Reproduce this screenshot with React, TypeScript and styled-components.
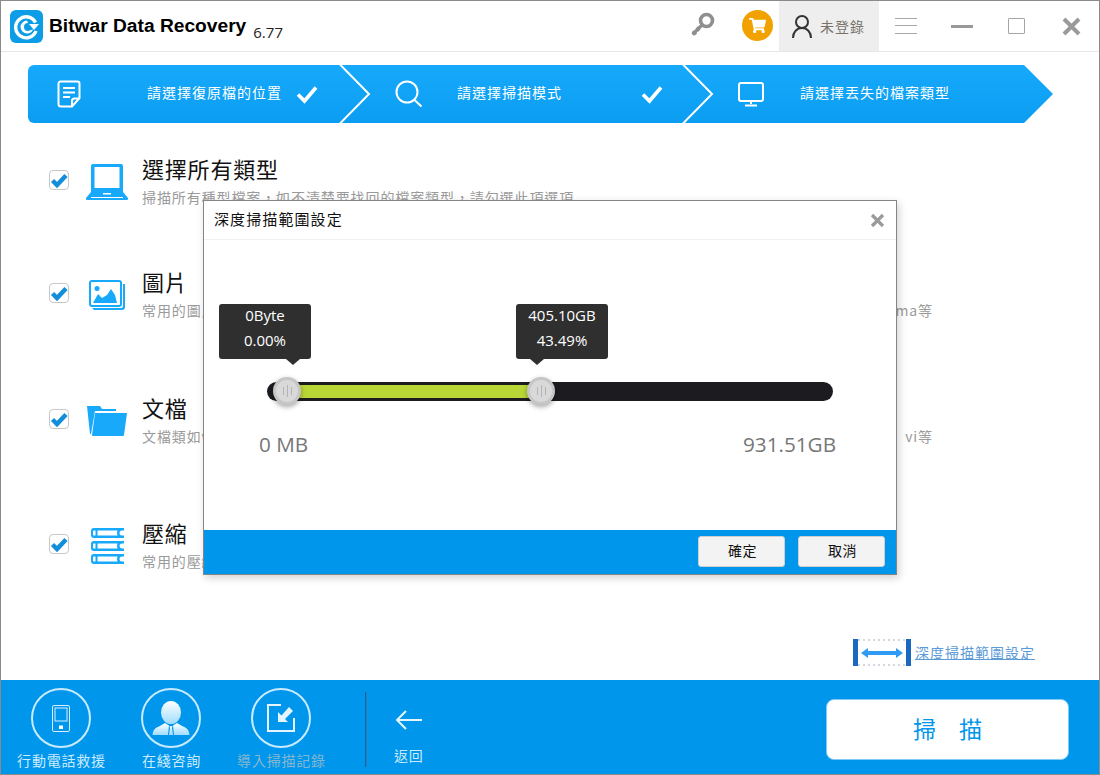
import React from "react";
import styled, { createGlobalStyle } from "styled-components";
import { FaShoppingCart } from "react-icons/fa";

const CJK = `"Noto Sans CJK TC", "Noto Sans", sans-serif`;
const BLUE = "#0096ec";
const ICON_BLUE = "#18a9fb";

const GlobalStyle = createGlobalStyle`
    html, body {
        margin: 0;
        padding: 0;
        background: #fff;
    }
    body {
        font-family: ${CJK};
    }
`;

const Window = styled.div`
    width: 1100px;
    height: 775px;
    box-sizing: border-box;
    border: 1px solid #8a8a8a;
    display: flex;
    flex-direction: column;
    background: #fff;
    overflow: hidden;
`;

const TitleBar = styled.header`
    height: 51px;
    flex: none;
    box-sizing: border-box;
    border-bottom: 1px solid #e6e6e6;
    display: flex;
    align-items: center;
    padding-left: 9px;
`;

const AppName = styled.span`
    font-family: "Liberation Sans", Arial, sans-serif;
    font-weight: 700;
    font-size: 19.2px;
    color: #000;
    margin-left: 6px;
    margin-top: -1px;
    white-space: nowrap;
`;

const Version = styled.span`
    font-family: "Open Sans", sans-serif;
    font-size: 15px;
    color: #222;
    margin-left: 7px;
    margin-top: 11px;
`;

const KeyButton = styled.div`
    margin-left: auto;
    margin-top: -3px;
    display: flex;
`;

const CartBadge = styled.div`
    width: 31px;
    height: 31px;
    border-radius: 50%;
    background: #f2a200;
    display: flex;
    align-items: center;
    justify-content: center;
    color: #fff;
    margin-left: 27px;
    margin-top: -2px;
`;

const UserPanel = styled.div`
    width: 100px;
    height: 50px;
    background: #eeeeee;
    margin-left: 6px;
    display: flex;
    align-items: center;
    padding-left: 13px;
    box-sizing: border-box;
    gap: 8px;
`;

const UserName = styled.span`
    font-size: 14px;
    letter-spacing: 1px;
    color: #77716a;
`;

const WindowControls = styled.div`
    display: flex;
    align-items: center;
    margin-left: 16px;
    margin-right: 18px;
`;

const MenuLines = styled.div`
    width: 22px;
    height: 14px;
    border-top: 1px solid #a8a8a8;
    border-bottom: 1px solid #a8a8a8;
    position: relative;
    &::after {
        content: "";
        position: absolute;
        left: 0;
        right: 0;
        top: 6px;
        height: 1px;
        background: #a8a8a8;
    }
`;

const MinimizeBar = styled.div`
    width: 22px;
    height: 3px;
    background: #999;
    margin-left: 34px;
`;

const MaximizeBox = styled.div`
    width: 17px;
    height: 16px;
    box-sizing: border-box;
    border: 1px solid #a5a5a5;
    border-radius: 1px;
    margin-left: 35px;
`;

const CloseGlyph = styled.svg`
    width: 19px;
    height: 19px;
    margin-left: 37px;
`;

const Main = styled.main`
    flex: 1;
    position: relative;
    display: flex;
    flex-direction: column;
    padding: 13px 0 0 27px;
    min-height: 0;
`;

const Stepper = styled.div`
    width: 1025px;
    height: 58px;
    flex: none;
    display: flex;
    color: #fff;
    background: linear-gradient(180deg, #17a9fb 0%, #0a9df1 100%);
    border-radius: 6px 0 0 6px;
    clip-path: polygon(0 0, 996px 0, 1025px 29px, 996px 58px, 0 58px);
`;

const Step = styled.div<{ $width: number; $pad: number }>`
    width: ${p => p.$width}px;
    padding-left: ${p => p.$pad}px;
    box-sizing: border-box;
    flex: none;
    position: relative;
    display: flex;
    align-items: center;
`;

const StepLabel = styled.span<{ $gap: number; $width?: number }>`
    margin-left: ${p => p.$gap}px;
    margin-top: -4px;
    width: ${p => (p.$width ? `${p.$width}px` : "auto")};
    flex: none;
    font-size: 14px;
    letter-spacing: 1px;
    white-space: nowrap;
`;

const StepArrow = styled.svg`
    position: absolute;
    right: -31px;
    top: 0;
    width: 32px;
    height: 58px;
    z-index: 1;
`;

const TypeList = styled.div`
    display: flex;
    flex-direction: column;
    margin-left: 21px;
`;

const TypeRow = styled.div<{ $top: number }>`
    display: flex;
    align-items: center;
    height: 56px;
    margin-top: ${p => p.$top}px;
`;

const CheckBox = styled.div`
    width: 20px;
    height: 20px;
    flex: none;
    box-sizing: border-box;
    border: 1px solid #c8c8c8;
    border-radius: 4px;
    position: relative;
`;

const CheckMark = styled.svg`
    position: absolute;
    left: 0;
    top: 1px;
    width: 19px;
    height: 17px;
`;

const TypeIcon = styled.div`
    width: 44px;
    height: 40px;
    flex: none;
    margin: 4px 13px 0 16px;
    display: flex;
    align-items: center;
    justify-content: center;
`;

const TypeText = styled.div`
    display: flex;
    flex-direction: column;
`;

const TypeTitle = styled.div`
    font-size: 22px;
    line-height: 32px;
    color: #111;
    letter-spacing: 0.8px;
`;

const TypeSub = styled.div`
    width: 791px;
    margin: 1px 0 -1px;
    display: flex;
    justify-content: space-between;
    font-size: 14px;
    letter-spacing: 0.9px;
    line-height: 24px;
    color: #9a9a9a;
    white-space: nowrap;
`;

const DeepLinkRow = styled.div`
    margin-top: auto;
    margin-bottom: 14px;
    margin-right: 64px;
    align-self: flex-end;
    display: flex;
    align-items: center;
    gap: 4px;
`;

const DeepLink = styled.a`
    font-size: 14px;
    letter-spacing: 1px;
    color: #5d9bd8;
    text-decoration: underline;
    margin-top: -2px;
`;

const Modal = styled.section`
    position: absolute;
    left: 202px;
    top: 148px;
    width: 694px;
    height: 375px;
    box-sizing: border-box;
    border: 1px solid #858585;
    background: #fff;
    box-shadow: 2px 3px 8px rgba(0, 0, 0, 0.18);
    display: flex;
    flex-direction: column;
    z-index: 2;
`;

const ModalHeader = styled.div`
    height: 39px;
    flex: none;
    box-sizing: border-box;
    border-bottom: 1px solid #f0f0f0;
    display: flex;
    align-items: center;
    justify-content: space-between;
    padding: 0 11px 0 10px;
`;

const ModalTitle = styled.h2`
    margin: 0 0 4px;
    font-weight: 400;
    font-size: 15px;
    letter-spacing: 1.1px;
    color: #111;
`;

const ModalBody = styled.div`
    flex: 1;
    padding: 142px 60px 0 55px;
`;

const Track = styled.div`
    position: relative;
    margin-left: 8px;
    width: 566px;
    height: 19px;
    border-radius: 10px;
    background: #1c1c20;
`;

const TrackFill = styled.div<{ $left: number; $width: number }>`
    position: absolute;
    left: ${p => p.$left}px;
    width: ${p => p.$width}px;
    top: 3px;
    height: 13px;
    background: #b9d637;
`;

const Thumb = styled.div<{ $left: number }>`
    position: absolute;
    left: ${p => p.$left}px;
    top: -5px;
    width: 28px;
    height: 28px;
    box-sizing: border-box;
    border-radius: 50%;
    background: #d9d9d9;
    border: 3px solid #c6c6c6;
    box-shadow: 0 2px 5px rgba(0, 0, 0, 0.35);
    display: flex;
    align-items: center;
    justify-content: center;
    gap: 3px;
    z-index: 1;
`;

const Grip = styled.span<{ $tall?: boolean }>`
    width: 1px;
    height: ${p => (p.$tall ? 12 : 8)}px;
    background: #b4b4b4;
`;

const Tip = styled.div<{ $left: number; $arrow: number }>`
    position: absolute;
    left: ${p => p.$left}px;
    top: -78px;
    width: 92px;
    height: 55px;
    box-sizing: border-box;
    border-radius: 3px;
    background: #2f2f2f;
    color: #fff;
    font-family: "Open Sans", sans-serif;
    font-size: 15px;
    line-height: 25px;
    text-align: center;
    &::after {
        content: "";
        position: absolute;
        left: ${p => p.$arrow - 7}px;
        top: 55px;
        border-style: solid;
        border-width: 6px 7px 0 7px;
        border-color: #2f2f2f transparent transparent transparent;
    }
`;

const TipText = styled.div`
    margin-top: -1px;
`;

const RangeLabels = styled.div`
    display: flex;
    justify-content: space-between;
    margin-top: 29px;
    font-family: "Open Sans", sans-serif;
    font-size: 20.7px;
    line-height: 28px;
    color: #777;
`;

const ModalFooter = styled.div`
    height: 44px;
    flex: none;
    box-sizing: border-box;
    background: ${BLUE};
    display: flex;
    justify-content: flex-end;
    align-items: flex-start;
    gap: 13px;
    padding: 6px 11px 0 0;
`;

const ModalButton = styled.button`
    width: 87px;
    height: 31px;
    box-sizing: border-box;
    border: 1px solid #cfcfcf;
    border-radius: 3px;
    background: #f3f3f3;
    font-family: ${CJK};
    font-size: 14px;
    letter-spacing: 0.6px;
    color: #111;
    padding: 0 0 3px 2px;
`;

const Footer = styled.footer`
    height: 94px;
    flex: none;
    background: ${BLUE};
    display: flex;
    align-items: flex-start;
    padding-left: 5px;
`;

const FooterItem = styled.div`
    width: 110px;
    padding-top: 8px;
    display: flex;
    flex-direction: column;
    align-items: center;
`;

const RoundIcon = styled.div`
    width: 60px;
    height: 60px;
    box-sizing: border-box;
    border: 2px solid #c9ebff;
    border-radius: 50%;
    display: flex;
    align-items: center;
    justify-content: center;
`;

const FooterLabel = styled.span<{ $muted?: boolean }>`
    font-size: 14px;
    letter-spacing: 0.8px;
    line-height: 22px;
    margin-top: 1px;
    margin-left: 1px;
    white-space: nowrap;
    color: ${p => (p.$muted ? "#86b6cf" : "#cdebff")};
`;

const Divider = styled.div`
    width: 1px;
    height: 75px;
    margin: 12px 0 0 29px;
    background: #0a68a8;
    border-right: 1px solid #2a7fb8;
`;

const BackItem = styled.div`
    margin-left: 27px;
    padding-top: 30px;
    display: flex;
    flex-direction: column;
    align-items: center;
`;

const BackLabel = styled(FooterLabel)`
    margin-top: 14px;
    margin-left: 0;
`;

const ScanButton = styled.button`
    margin: 19px 30px 0 auto;
    width: 243px;
    height: 61px;
    box-sizing: border-box;
    background: #fff;
    border: 1px solid #7fcbf6;
    border-radius: 8px;
    font-family: ${CJK};
    font-size: 23px;
    color: ${BLUE};
    padding: 0 0 4px;
`;

const AppLogo = () => (
    <svg width="33" height="33" viewBox="0 0 33 33">
        <rect width="33" height="33" rx="6" fill="#0d9ce6" />
        <path d="M25.5 12.5A10.5 10.5 0 1 0 26 21" fill="none" stroke="#fff" strokeWidth="3.4" />
        <path d="M17 10.5a6.5 6.5 0 0 0 0 13c3 0 5-1.5 6-4l-5 1.5a3 3 0 1 1 0-8z" fill="#fff" />
        <path d="M19 14h10l-5 6z" fill="#fff" />
    </svg>
);

const KeyIcon = () => (
    <svg width="25" height="25" viewBox="0 0 25 25">
        <circle cx="16.5" cy="8.5" r="6" fill="none" stroke="#8f8f8f" strokeWidth="3.6" />
        <path d="M12 13L2.5 22.5M3 19l3 3.5M6.5 15.5l3 3" fill="none" stroke="#8f8f8f" strokeWidth="3.2" />
    </svg>
);

const UserIcon = () => (
    <svg width="20" height="25" viewBox="0 0 20 25" fill="none" stroke="#333" strokeWidth="2">
        <circle cx="10" cy="8" r="6" />
        <path d="M1 24c0-6 4-10 9-10s9 4 9 10" />
    </svg>
);

const DocIcon = () => (
    <svg width="24" height="28" viewBox="0 0 24 28" fill="none" stroke="#fff" strokeWidth="2">
        <path d="M15 26.5H4a2.5 2.5 0 0 1-2.5-2.5V3.5A2 2 0 0 1 3.5 1.5h17a2 2 0 0 1 2 2V18z" />
        <path d="M6 8h12M6 12.5h12M6 17h7" />
        <path d="M15 26.5V21a2.5 2.5 0 0 1 2.5-2.5h5" />
    </svg>
);

const SearchIcon = () => (
    <svg width="28" height="28" viewBox="0 0 28 28" fill="none" stroke="#fff" strokeWidth="2">
        <circle cx="12" cy="12" r="10.5" />
        <path d="M19.5 20l7 6.5" />
    </svg>
);

const MonitorIcon = () => (
    <svg width="26" height="25" viewBox="0 0 26 25" fill="none" stroke="#fff" strokeWidth="2">
        <rect x="1" y="1" width="24" height="18" rx="2" />
        <path d="M13 19v3M7 23.5h12" />
    </svg>
);

const TickIcon = () => (
    <svg width="22" height="19" viewBox="0 0 22 19" fill="none" stroke="#fff" strokeWidth="3.6">
        <path d="M2 9.5l6.5 6.5L20 2.5" />
    </svg>
);

const Chevron = () => (
    <StepArrow viewBox="0 0 32 58">
        <path d="M0.5 -1L30 29L0.5 59" fill="none" stroke="#fff" strokeWidth="2" />
    </StepArrow>
);

const LaptopIcon = () => (
    <svg width="42" height="36" viewBox="0 0 42 36">
        <path d="M7 0h28a2 2 0 0 1 2 2v26H5V2a2 2 0 0 1 2-2zM8.5 3v21h25V3z" fill={ICON_BLUE} fillRule="evenodd" />
        <path d="M5 28h32l5 6a1.5 1.5 0 0 1-1.5 2h-39A1.5 1.5 0 0 1 0 34z" fill={ICON_BLUE} />
        <path d="M17 29h8v1.5h-8zM5 33h32v1H5z" fill="#fff" />
    </svg>
);

const PhotoIcon = () => (
    <svg width="36" height="30" viewBox="0 0 36 30">
        <rect x="1" y="1" width="31" height="25" rx="2" fill="#fff" stroke={ICON_BLUE} strokeWidth="2" />
        <path d="M3 28h29a2 2 0 0 0 2-2V4h2v23a3 3 0 0 1-3 3H5z" fill={ICON_BLUE} />
        <circle cx="8" cy="8.5" r="2.5" fill={ICON_BLUE} />
        <path d="M4 23l5-9 4 4 5-3 4-6 4 6 2 8z" fill={ICON_BLUE} />
    </svg>
);

const FolderIcon = () => (
    <svg width="40" height="30" viewBox="0 0 40 30">
        <path d="M0 0h13l2 3h14v2H8L4 28H3z" fill={ICON_BLUE} />
        <path d="M8 7h32l-3 22a1 1 0 0 1-1 1H6a1 1 0 0 1-1-1z" fill={ICON_BLUE} />
    </svg>
);

const StackIcon = () => (
    <svg width="33" height="36" viewBox="0 0 33 36">
        {[0, 13, 26].map(y => (
            <path
                key={y}
                d={`M3 ${y}h30v2.5h-2a2.5 2.5 0 0 0 0 5h2V${y + 10}H3a3 3 0 0 1-3-3v-4a3 3 0 0 1 3-3zM3 ${y + 2.5}a1 1 0 0 0-1 1v3a1 1 0 0 0 1 1h1.5v-5zM6.5 ${y + 2.5}v5H26.5a6 6 0 0 1 0-5z`}
                fill={ICON_BLUE}
                fillRule="evenodd"
            />
        ))}
    </svg>
);

const PhoneIcon = () => (
    <svg width="20" height="29" viewBox="0 0 20 29" fill="none" stroke="#d5efff" strokeWidth="1">
        <rect x="1.5" y="1.5" width="17" height="26" rx="1.5" />
        <rect x="4" y="4" width="12" height="13" />
        <rect x="8" y="21.5" width="4" height="3.5" fill="#fff" stroke="none" />
    </svg>
);

const PersonIcon = () => (
    <svg width="38" height="34" viewBox="0 0 38 34">
        <defs>
            <linearGradient id="personFill" x1="0" y1="0" x2="0" y2="1">
                <stop offset="0" stopColor="#ffffff" />
                <stop offset="1" stopColor="#9fdcff" />
            </linearGradient>
        </defs>
        <ellipse cx="19" cy="11.5" rx="10" ry="11.5" fill="url(#personFill)" />
        <path d="M13 22l4 2.5-1 9.5H0.5C1 29 3 27 7 25.5zM25 22l-4 2.5 1 9.5h15.5C37 29 35 27 31 25.5zM17.5 25h3l-0.5 2 1 7h-4l1-7z" fill="url(#personFill)" />
    </svg>
);

const ImportIcon = () => (
    <svg width="28" height="28" viewBox="0 0 28 28">
        <path d="M14 1H1V27H27V14" fill="none" stroke="#e4f5ff" strokeWidth="2" />
        <path d="M11 8l3.5 3.5L22 3l4 4-8 8 3 3H11z" fill="#e4f5ff" />
    </svg>
);

const RangeIcon = () => (
    <svg width="58" height="27" viewBox="0 0 58 27">
        <path d="M5 1h48M5 26h48" stroke="#c5ccd3" strokeWidth="1.5" strokeDasharray="2 3" fill="none" />
        <rect x="0" y="0" width="5" height="27" fill="#1c68c0" />
        <rect x="53" y="0" width="5" height="27" fill="#1c68c0" />
        <path d="M8 14l7-5v3h28V9l7 5-7 5v-3H15v3z" fill="#2f9bf5" />
    </svg>
);

const TYPES = [
    {
        top: 29,
        icon: <LaptopIcon />,
        title: "選擇所有類型",
        sub: "掃描所有種型檔案，如不清楚要找回的檔案類型，請勾選此項選項",
        tail: "",
    },
    { top: 57, icon: <PhotoIcon />, title: "圖片", sub: "常用的圖片類型", tail: "ma等" },
    { top: 70, icon: <FolderIcon />, title: "文檔", sub: "文檔類如word", tail: "vi等" },
    { top: 69, icon: <StackIcon />, title: "壓縮", sub: "常用的壓縮檔案", tail: "" },
];

const Thumbs = ({ left }: { left: number }) => (
    <Thumb $left={left}>
        <Grip />
        <Grip $tall />
        <Grip />
    </Thumb>
);

const App = () => {
    return (
        <>
            <GlobalStyle />
            <Window>
                <TitleBar>
                    <AppLogo />
                    <AppName>Bitwar Data Recovery</AppName>
                    <Version>6.77</Version>
                    <KeyButton>
                        <KeyIcon />
                    </KeyButton>
                    <CartBadge>
                        <FaShoppingCart size={17} />
                    </CartBadge>
                    <UserPanel>
                        <UserIcon />
                        <UserName>未登錄</UserName>
                    </UserPanel>
                    <WindowControls>
                        <MenuLines />
                        <MinimizeBar />
                        <MaximizeBox />
                        <CloseGlyph viewBox="0 0 19 19">
                            <path d="M2 2l15 15M17 2L2 17" stroke="#9a9a9a" strokeWidth="4" />
                        </CloseGlyph>
                    </WindowControls>
                </TitleBar>
                <Main>
                    <Stepper>
                        <Step $width={312} $pad={29}>
                            <DocIcon />
                            <StepLabel $gap={66} $width={149}>請選擇復原檔的位置</StepLabel>
                            <TickIcon />
                            <Chevron />
                        </Step>
                        <Step $width={343} $pad={55}>
                            <SearchIcon />
                            <StepLabel $gap={34} $width={184}>請選擇掃描模式</StepLabel>
                            <TickIcon />
                            <Chevron />
                        </Step>
                        <Step $width={370} $pad={55}>
                            <MonitorIcon />
                            <StepLabel $gap={36}>請選擇丟失的檔案類型</StepLabel>
                        </Step>
                    </Stepper>
                    <TypeList>
                        {TYPES.map(type => (
                            <TypeRow key={type.title} $top={type.top}>
                                <CheckBox>
                                    <CheckMark viewBox="0 0 19 17">
                                        <path d="M2.5 8.5l4.5 4.5L16 3.5" fill="none" stroke="#128edb" strokeWidth="4.5" />
                                    </CheckMark>
                                </CheckBox>
                                <TypeIcon>{type.icon}</TypeIcon>
                                <TypeText>
                                    <TypeTitle>{type.title}</TypeTitle>
                                    <TypeSub>
                                        <span>{type.sub}</span>
                                        <span>{type.tail}</span>
                                    </TypeSub>
                                </TypeText>
                            </TypeRow>
                        ))}
                    </TypeList>
                    <DeepLinkRow>
                        <RangeIcon />
                        <DeepLink>深度掃描範圍設定</DeepLink>
                    </DeepLinkRow>
                    <Modal>
                        <ModalHeader>
                            <ModalTitle>深度掃描範圍設定</ModalTitle>
                            <svg width="15" height="15" viewBox="0 0 15 15">
                                <path d="M2 2l11 11M13 2L2 13" stroke="#9a9a9a" strokeWidth="3.2" />
                            </svg>
                        </ModalHeader>
                        <ModalBody>
                            <Track>
                                <TrackFill $left={20} $width={254} />
                                <Tip $left={-48} $arrow={74}>
                                    <TipText>
                                        0Byte
                                        <br />
                                        0.00%
                                    </TipText>
                                </Tip>
                                <Tip $left={249} $arrow={21}>
                                    <TipText>
                                        405.10GB
                                        <br />
                                        43.49%
                                    </TipText>
                                </Tip>
                                <Thumbs left={6} />
                                <Thumbs left={260} />
                            </Track>
                            <RangeLabels>
                                <span>0 MB</span>
                                <span>931.51GB</span>
                            </RangeLabels>
                        </ModalBody>
                        <ModalFooter>
                            <ModalButton>確定</ModalButton>
                            <ModalButton>取消</ModalButton>
                        </ModalFooter>
                    </Modal>
                </Main>
                <Footer>
                    <FooterItem>
                        <RoundIcon>
                            <PhoneIcon />
                        </RoundIcon>
                        <FooterLabel>行動電話救援</FooterLabel>
                    </FooterItem>
                    <FooterItem>
                        <RoundIcon>
                            <PersonIcon />
                        </RoundIcon>
                        <FooterLabel>在綫咨詢</FooterLabel>
                    </FooterItem>
                    <FooterItem>
                        <RoundIcon>
                            <ImportIcon />
                        </RoundIcon>
                        <FooterLabel $muted>導入掃描記錄</FooterLabel>
                    </FooterItem>
                    <Divider />
                    <BackItem>
                        <svg width="28" height="20" viewBox="0 0 28 20" fill="none" stroke="#e4f5ff" strokeWidth="2">
                            <path d="M27 10H2M11 1l-9 9 9 9" />
                        </svg>
                        <BackLabel>返回</BackLabel>
                    </BackItem>
                    <ScanButton>掃　描</ScanButton>
                </Footer>
            </Window>
        </>
    );
};

export default App;
